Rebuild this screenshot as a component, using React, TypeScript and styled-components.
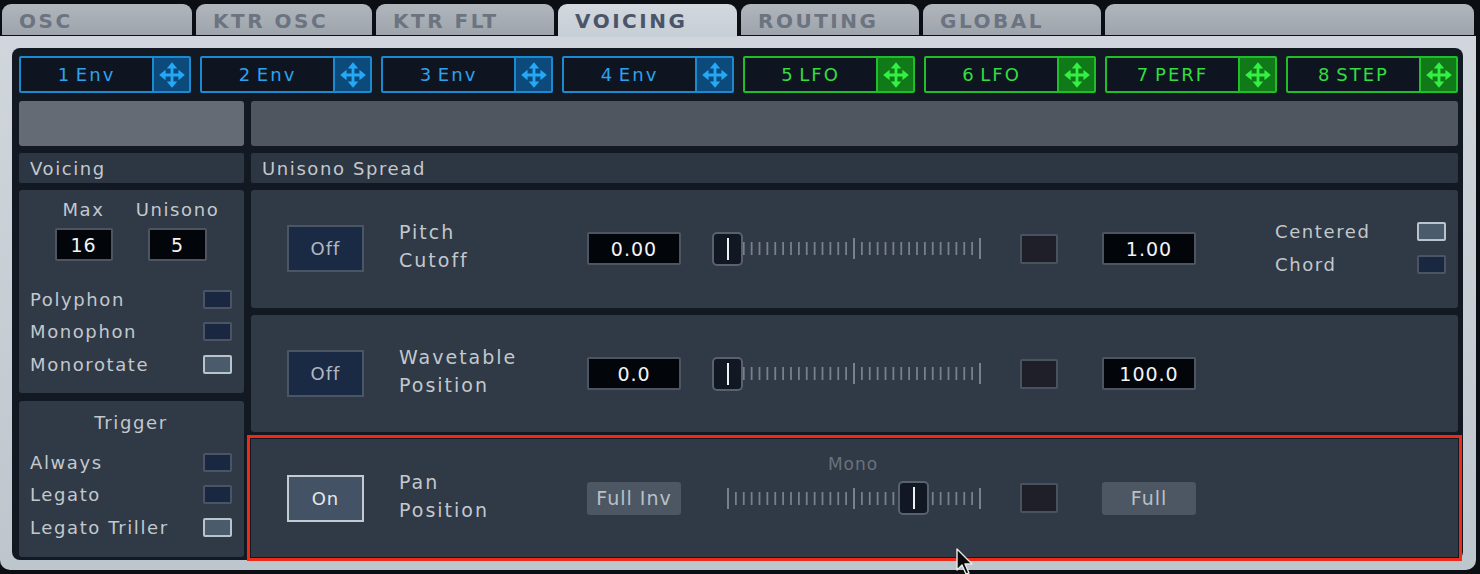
import styled, { createGlobalStyle } from 'styled-components';

const GlobalStyle = createGlobalStyle`
    html, body {
        margin: 0;
        padding: 0;
        background: #0b0e13;
    }
    body {
        font-family: 'DejaVu Sans', 'Liberation Sans', sans-serif;
        -webkit-font-smoothing: antialiased;
    }
`;

const tabs = [
    { label: 'OSC', width: 190 },
    { label: 'KTR OSC', width: 176 },
    { label: 'KTR FLT', width: 178 },
    { label: 'VOICING', width: 179, active: true },
    { label: 'ROUTING', width: 178 },
    { label: 'GLOBAL', width: 178 },
    { label: '', width: 0 },
];

const slots = [
    { label: '1 Env', kind: 'env' },
    { label: '2 Env', kind: 'env' },
    { label: '3 Env', kind: 'env' },
    { label: '4 Env', kind: 'env' },
    { label: '5 LFO', kind: 'lfo' },
    { label: '6 LFO', kind: 'lfo' },
    { label: '7 PERF', kind: 'lfo' },
    { label: '8 STEP', kind: 'lfo' },
] as const;

type SlotKind = 'env' | 'lfo';

const slotColors = {
    env: { border: '#1b8ad0', text: '#2ca2ee', iconBg: '#0d4a7c', icon: '#25a8f6' },
    lfo: { border: '#1fbf2a', text: '#33de3e', iconBg: '#107a19', icon: '#35f044' },
};

const TRACK = 252;
const STEPS = 32;

function MoveIcon({ color }: { color: string }) {
    return (
        <svg width="28" height="28" viewBox="0 0 24 24">
            <path d="M12 5v14M5 12h14" stroke={color} strokeWidth="2.4" />
            <polygon points="12,1 7.5,6.5 16.5,6.5" fill={color} />
            <polygon points="12,23 7.5,17.5 16.5,17.5" fill={color} />
            <polygon points="1,12 6.5,7.5 6.5,16.5" fill={color} />
            <polygon points="23,12 17.5,7.5 17.5,16.5" fill={color} />
        </svg>
    );
}

// tick scale under the slider handle, long marks at both ends and the middle
function Scale() {
    const ticks = [];
    for (let i = 0; i <= STEPS; i++) {
        const x = 1 + i * (TRACK / STEPS);
        const major = i % (STEPS / 2) === 0;
        ticks.push(
            <line
                key={i}
                x1={x}
                x2={x}
                y1={major ? 0 : 4}
                y2={major ? 21 : 17}
                stroke={major ? '#8b939d' : '#78808a'}
                strokeWidth={major ? 1.6 : 1.8}
            />
        );
    }
    return (
        <svg width={TRACK + 2} height="21" viewBox={`0 0 ${TRACK + 2} 21`}>
            {ticks}
        </svg>
    );
}

interface SliderProps {
    value: number;
    caption?: string;
}
function Slider({ value, caption }: SliderProps) {
    return (
        <SliderWrap>
            {caption && <SliderCaption>{caption}</SliderCaption>}
            <ScaleWrap>
                <Scale />
            </ScaleWrap>
            <Handle style={{ left: value * TRACK }}>
                <HandleLine />
            </Handle>
        </SliderWrap>
    );
}

function Pointer() {
    return (
        <PointerWrap>
            <svg width="20" height="28" viewBox="0 0 20 28">
                <path d="M2 1 L2 22 L7 17 L11 26 L14 25 L10 16 L17 16 Z" fill="#0a0a0a" stroke="#e8e8e8" strokeWidth="1.4" strokeLinejoin="round" />
            </svg>
        </PointerWrap>
    );
}

export default function App() {
    return (
        <Root>
            <GlobalStyle />
            <TabBar>
                {tabs.map((t, i) => (
                    <Tab key={i} $width={t.width} $active={!!t.active}>
                        {t.label}
                    </Tab>
                ))}
            </TabBar>

            <Frame>
                <Inner>
                    <SlotRow>
                        {slots.map(s => (
                            <Slot key={s.label} $kind={s.kind}>
                                <SlotLabel $kind={s.kind}>{s.label}</SlotLabel>
                                <SlotGrip $kind={s.kind}>
                                    <MoveIcon color={slotColors[s.kind].icon} />
                                </SlotGrip>
                            </Slot>
                        ))}
                    </SlotRow>

                    <Body>
                        <Bar $shade="#646b74" />
                        <Bar $shade="#4f5660" />
                        <SectionTitle>Voicing</SectionTitle>
                        <SectionTitle>Unisono Spread</SectionTitle>

                        <LeftCol>
                            <Box $height={203}>
                                <CountRow>
                                    <Count>
                                        <Caption>Max</Caption>
                                        <NumberBox $width={58}>16</NumberBox>
                                    </Count>
                                    <Count>
                                        <Caption>Unisono</Caption>
                                        <NumberBox $width={59}>5</NumberBox>
                                    </Count>
                                </CountRow>
                                <CheckList>
                                    <CheckRow>Polyphon<Check /></CheckRow>
                                    <CheckRow>Monophon<Check /></CheckRow>
                                    <CheckRow>Monorotate<Check $on /></CheckRow>
                                </CheckList>
                            </Box>
                            <Box>
                                <BoxTitle>Trigger</BoxTitle>
                                <CheckList>
                                    <CheckRow>Always<Check /></CheckRow>
                                    <CheckRow>Legato<Check /></CheckRow>
                                    <CheckRow>Legato Triller<Check $on /></CheckRow>
                                </CheckList>
                            </Box>
                        </LeftCol>

                        <RightCol>
                            <ParamRow>
                                <Toggle>Off</Toggle>
                                <ParamName>Pitch<br />Cutoff</ParamName>
                                <NumberBox $width={94}>0.00</NumberBox>
                                <Slider value={0} />
                                <Swatch />
                                <NumberBox $width={94} $gap={44}>1.00</NumberBox>
                                <Options>
                                    <OptionLabel>Centered</OptionLabel>
                                    <Check $on />
                                    <OptionLabel>Chord</OptionLabel>
                                    <Check />
                                </Options>
                            </ParamRow>

                            <ParamRow>
                                <Toggle>Off</Toggle>
                                <ParamName>Wavetable<br />Position</ParamName>
                                <NumberBox $width={94}>0.0</NumberBox>
                                <Slider value={0} />
                                <Swatch />
                                <NumberBox $width={94} $gap={44}>100.0</NumberBox>
                            </ParamRow>

                            <ParamRow $marked>
                                <Toggle $on>On</Toggle>
                                <ParamName>Pan<br />Position</ParamName>
                                <FlatButton>Full Inv</FlatButton>
                                <Slider value={0.74} caption="Mono" />
                                <Swatch />
                                <FlatButton $gap={44}>Full</FlatButton>
                            </ParamRow>
                        </RightCol>
                    </Body>
                </Inner>
            </Frame>

            <Pointer />
        </Root>
    );
}

const Root = styled.div`
    position: relative;
    width: 1480px;
    height: 574px;
    overflow: hidden;
    background: #0b0e13;
`;

const TabBar = styled.div`
    display: flex;
    gap: 4px;
    height: 36px;
    padding: 4px 6px 0 2px;
    box-sizing: border-box;
`;

const Tab = styled.div<{ $width: number, $active: boolean }>`
    ${({ $width }) => $width ? `width: ${$width}px;` : 'flex: 1;'}
    height: ${({ $active }) => $active ? 33 : 31}px;
    box-sizing: border-box;
    padding: 3px 0 0 17px;
    border-radius: 9px 9px 0 0;
    background: ${({ $active }) => $active
        ? 'linear-gradient(#d2d8de, #c7ced5)'
        : 'linear-gradient(#b1b6bd, #9ea4ab)'};
    color: ${({ $active }) => $active ? '#4b5569' : '#6c7381'};
    font-family: 'DejaVu Sans', sans-serif;
    font-weight: 700;
    font-size: 20px;
    letter-spacing: 2.5px;
    line-height: 28px;
    white-space: nowrap;
`;

const Frame = styled.div`
    width: 1476px;
    height: 534px;
    box-sizing: border-box;
    padding: 12px 13px 10px 12px;
    background: linear-gradient(#d0d6dc, #bec6cd);
    border-radius: 0 0 10px 10px;
`;

const Inner = styled.div`
    height: 100%;
    box-sizing: border-box;
    padding: 8px 5px 3px 7px;
    display: flex;
    flex-direction: column;
    background: #121922;
    border-radius: 8px;
`;

const SlotRow = styled.div`
    display: grid;
    grid-template-columns: repeat(8, 1fr);
    column-gap: 9px;
    height: 37px;
`;

const Slot = styled.div<{ $kind: SlotKind }>`
    display: flex;
    border: 2px solid ${({ $kind }) => slotColors[$kind].border};
    border-radius: 2px;
    background: #0e1521;
`;

const SlotLabel = styled.div<{ $kind: SlotKind }>`
    flex: 1;
    display: flex;
    align-items: center;
    justify-content: center;
    color: ${({ $kind }) => slotColors[$kind].text};
    font-size: 18px;
    letter-spacing: 2px;
    word-spacing: -3px;
`;

const SlotGrip = styled.div<{ $kind: SlotKind }>`
    width: 35px;
    display: flex;
    align-items: center;
    justify-content: center;
    border-left: 2px solid ${({ $kind }) => slotColors[$kind].border};
    background: ${({ $kind }) => slotColors[$kind].iconBg};
`;

const Body = styled.div`
    flex: 1;
    margin-top: 8px;
    display: grid;
    grid-template-columns: 225px 1fr;
    grid-template-rows: 45px 30px 1fr;
    column-gap: 7px;
    row-gap: 7px;
`;

const Bar = styled.div<{ $shade: string }>`
    background: ${({ $shade }) => $shade};
    border-radius: 3px;
`;

const SectionTitle = styled.div`
    display: flex;
    align-items: center;
    padding-left: 11px;
    background: #2d3643;
    border-radius: 2px;
    color: #c3c8cd;
    font-size: 18px;
    letter-spacing: 1.6px;
`;

const LeftCol = styled.div`
    display: flex;
    flex-direction: column;
    gap: 8px;
`;

const Box = styled.div<{ $height?: number }>`
    ${({ $height }) => $height ? `height: ${$height}px;` : 'flex: 1;'}
    box-sizing: border-box;
    padding: 9px 12px 0 11px;
    background: #303946;
    border-radius: 3px;
`;

const CountRow = styled.div`
    display: flex;
    justify-content: center;
    gap: 24px;
    margin: 0 0 28px -1px;
`;

const Count = styled.div`
    width: 70px;
    display: flex;
    flex-direction: column;
    align-items: center;
    gap: 8px;
`;

const Caption = styled.div`
    color: #c3c8cd;
    font-size: 18px;
    letter-spacing: 1.6px;
    white-space: nowrap;
`;

const BoxTitle = styled(Caption)`
    text-align: center;
    margin: 2px 0 19px;
`;

const CheckList = styled.div`
    display: flex;
    flex-direction: column;
    gap: 12.5px;
`;

const CheckRow = styled.div`
    display: flex;
    align-items: center;
    justify-content: space-between;
    height: 20px;
    color: #c3c8cd;
    font-size: 18px;
    letter-spacing: 1.6px;
    white-space: nowrap;
`;

const Check = styled.div<{ $on?: boolean }>`
    width: 29px;
    height: 19px;
    box-sizing: border-box;
    border: 2px solid ${({ $on }) => $on ? '#b9c3cb' : '#4a5464'};
    background: ${({ $on }) => $on ? '#4a5b6c' : '#1a2740'};
    border-radius: 2px;
`;

const NumberBox = styled.div<{ $width: number, $gap?: number }>`
    width: ${({ $width }) => $width}px;
    height: 33px;
    box-sizing: border-box;
    margin-left: ${({ $gap }) => $gap ?? 0}px;
    display: flex;
    align-items: center;
    justify-content: center;
    background: #02050a;
    border: 2px solid #4e5560;
    border-radius: 2px;
    color: #f2f4f6;
    font-size: 19px;
    letter-spacing: 1px;
`;

const RightCol = styled.div`
    display: flex;
    flex-direction: column;
    gap: 7px;
`;

const ParamRow = styled.div<{ $marked?: boolean }>`
    flex: 1;
    display: flex;
    align-items: center;
    padding: 0 12px 0 36px;
    background: #303946;
    border-radius: ${({ $marked }) => $marked ? 0 : 3}px;
    outline: ${({ $marked }) => $marked ? '3.5px solid #ee2a18' : 'none'};
    outline-offset: 1px;
`;

const Toggle = styled.div<{ $on?: boolean }>`
    width: 77px;
    height: 47px;
    box-sizing: border-box;
    margin-right: 35px;
    display: flex;
    align-items: center;
    justify-content: center;
    border: 2px solid ${({ $on }) => $on ? '#c3cbd2' : '#4a5566'};
    background: ${({ $on }) => $on ? '#445265' : '#1b2a44'};
    color: ${({ $on }) => $on ? '#e4e8ec' : '#b0b8c1'};
    font-size: 18px;
    letter-spacing: 1px;
`;

const ParamName = styled.div`
    width: 188px;
    padding-bottom: 5px;
    color: #c3c8cd;
    font-size: 19px;
    line-height: 28px;
    letter-spacing: 2px;
`;

const FlatButton = styled.div<{ $gap?: number }>`
    width: 94px;
    height: 33px;
    margin-left: ${({ $gap }) => $gap ?? 0}px;
    display: flex;
    align-items: center;
    justify-content: center;
    background: #4c5763;
    border-radius: 3px;
    color: #b9c0c7;
    font-size: 19px;
    letter-spacing: 1px;
    white-space: nowrap;
`;

const SliderWrap = styled.div`
    position: relative;
    width: 268px;
    height: 34px;
    margin-left: 31px;
    display: flex;
    align-items: center;
`;

const ScaleWrap = styled.div`
    padding-left: 15px;
    display: flex;
`;

const SliderCaption = styled.div`
    position: absolute;
    top: -27px;
    left: 15px;
    width: ${TRACK}px;
    text-align: center;
    color: #69717c;
    font-size: 17px;
    letter-spacing: 1px;
`;

const Handle = styled.div`
    position: absolute;
    top: 0;
    width: 31px;
    height: 34px;
    box-sizing: border-box;
    display: flex;
    align-items: center;
    justify-content: center;
    background: #111824;
    border: 2px solid #59616c;
    border-radius: 5px;
`;

const HandleLine = styled.div`
    width: 2px;
    height: 22px;
    background: #eef0f2;
`;

const Swatch = styled.div`
    width: 38px;
    height: 30px;
    box-sizing: border-box;
    margin-left: 40px;
    background: #1e1f29;
    border: 2px solid #4a525d;
    border-radius: 2px;
`;

const Options = styled.div`
    margin-left: auto;
    margin-bottom: 2px;
    display: grid;
    grid-template-columns: 142px 29px;
    row-gap: 12px;
    align-items: center;
`;

const OptionLabel = styled.div`
    color: #c3c8cd;
    font-size: 18px;
    letter-spacing: 1.6px;
`;

const PointerWrap = styled.div`
    position: absolute;
    left: 955px;
    top: 548px;
`;
